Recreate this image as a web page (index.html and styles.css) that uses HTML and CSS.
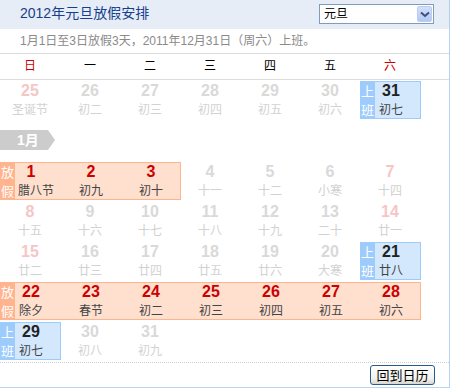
FILE: index.html
```html
<!DOCTYPE html>
<html lang="zh-CN">
<head>
<meta charset="utf-8">
<title>2012年元旦放假安排</title>
<link rel="stylesheet" href="styles.css">
</head>
<body>
<div class="panel">
  <div class="head">
    <h1 class="title">2012年元旦放假安排</h1>
    <div class="picker">
      <span class="picker-text">元旦</span>
      <span class="picker-btn">
        <svg width="10" height="7" viewBox="0 0 10 7"><path d="M1 1.5 L5 5 L9 1.5" fill="none" stroke="#3b4f7a" stroke-width="2"/></svg>
      </span>
    </div>
  </div>
  <div class="note">1月1日至3日放假3天，2011年12月31日（周六）上班。</div>
  <div class="weekdays">
    <span class="wd red">日</span><span class="wd">一</span><span class="wd">二</span><span class="wd">三</span><span class="wd">四</span><span class="wd">五</span><span class="wd red">六</span>
  </div>

  <div class="week first">
    <div class="d dim sun"><b>25</b><i>圣诞节</i></div>
    <div class="d dim"><b>26</b><i>初二</i></div>
    <div class="d dim"><b>27</b><i>初三</i></div>
    <div class="d dim"><b>28</b><i>初四</i></div>
    <div class="d dim"><b>29</b><i>初五</i></div>
    <div class="d dim"><b>30</b><i>初六</i></div>
    <div class="range work c7 n1"><span class="tag">上<br>班</span>
      <div class="d"><b>31</b><i>初七</i></div>
    </div>
  </div>

  <div class="month"><span class="month-flag">1月</span></div>

  <div class="week">
    <div class="range holiday c1 n3"><span class="tag">放<br>假</span>
      <div class="d"><b>1</b><i class="wide">腊八节</i></div>
      <div class="d"><b>2</b><i>初九</i></div>
      <div class="d"><b>3</b><i>初十</i></div>
    </div>
    <div class="d dim"><b>4</b><i>十一</i></div>
    <div class="d dim"><b>5</b><i>十二</i></div>
    <div class="d dim"><b>6</b><i>小寒</i></div>
    <div class="d dim sun"><b>7</b><i>十四</i></div>
  </div>

  <div class="week">
    <div class="d dim sun"><b>8</b><i>十五</i></div>
    <div class="d dim"><b>9</b><i>十六</i></div>
    <div class="d dim"><b>10</b><i>十七</i></div>
    <div class="d dim"><b>11</b><i>十八</i></div>
    <div class="d dim"><b>12</b><i>十九</i></div>
    <div class="d dim"><b>13</b><i>二十</i></div>
    <div class="d dim sun"><b>14</b><i>廿一</i></div>
  </div>

  <div class="week">
    <div class="d dim sun"><b>15</b><i>廿二</i></div>
    <div class="d dim"><b>16</b><i>廿三</i></div>
    <div class="d dim"><b>17</b><i>廿四</i></div>
    <div class="d dim"><b>18</b><i>廿五</i></div>
    <div class="d dim"><b>19</b><i>廿六</i></div>
    <div class="d dim"><b>20</b><i>大寒</i></div>
    <div class="range work c7 n1"><span class="tag">上<br>班</span>
      <div class="d"><b>21</b><i>廿八</i></div>
    </div>
  </div>

  <div class="week">
    <div class="range holiday c1 n7"><span class="tag">放<br>假</span>
      <div class="d"><b>22</b><i>除夕</i></div>
      <div class="d"><b>23</b><i>春节</i></div>
      <div class="d"><b>24</b><i>初二</i></div>
      <div class="d"><b>25</b><i>初三</i></div>
      <div class="d"><b>26</b><i>初四</i></div>
      <div class="d"><b>27</b><i>初五</i></div>
      <div class="d"><b>28</b><i>初六</i></div>
    </div>
  </div>

  <div class="week">
    <div class="range work c1 n1"><span class="tag">上<br>班</span>
      <div class="d"><b>29</b><i>初七</i></div>
    </div>
    <div class="d dim"><b>30</b><i>初八</i></div>
    <div class="d dim"><b>31</b><i>初九</i></div>
  </div>

  <div class="foot">
    <button class="back" type="button">回到日历</button>
  </div>
</div>
</body>
</html>
```

FILE: styles.css
```css
* { box-sizing: border-box; }
html, body { margin: 0; padding: 0; background: #fff; }
body {
  font-family: "Liberation Sans", "Noto Sans CJK SC", sans-serif;
  font-size: 12px;
  color: #333;
}
.panel {
  width: 450px;
  height: 388px;
  border-right: 1px solid #b5d0f3;
  border-bottom: 1px solid #bcd4f4;
}
.head {
  height: 29px;
  background: #e6edf7;
  display: flex;
  align-items: flex-start;
  justify-content: space-between;
  padding: 4px 15px 0 20px;
}
.title {
  margin: 0;
  font-size: 14px;
  font-weight: normal;
  line-height: 18px;
  color: #173f8c;
}
.picker {
  width: 115px;
  height: 20px;
  border: 1px solid #7f9db9;
  background: #fff;
  display: flex;
  align-items: center;
  justify-content: space-between;
  padding: 0 1px 0 4px;
}
.picker-text { font-size: 12px; color: #000; line-height: 16px; }
.picker-btn {
  width: 15px;
  height: 16px;
  border-radius: 2px;
  background: linear-gradient(#d3dffa, #b4c8f4);
  border: 1px solid #bccdf2;
  display: flex;
  align-items: center;
  justify-content: center;
}
.note {
  height: 25px;
  line-height: 24px;
  padding-left: 20px;
  color: #8a8a8a;
  border-bottom: 1px solid #dcdcdc;
}
.weekdays {
  display: grid;
  grid-template-columns: repeat(7, 60px);
  height: 26px;
  border-bottom: 1px solid #dcdcdc;
}
.wd {
  text-align: center;
  line-height: 25px;
  color: #000;
  font-size: 12px;
}
.wd.red { color: #c00; }

.week {
  display: grid;
  grid-template-columns: repeat(7, 60px);
  height: 40px;
}
.d {
  display: flex;
  flex-direction: column;
  align-items: center;
  padding-top: 1px;
  white-space: nowrap;
}
.d b {
  font-size: 16px;
  font-weight: bold;
  line-height: 20px;
  color: #222;
}
.d i {
  font-style: normal;
  font-size: 12px;
  line-height: 18px;
  color: #444;
}
.d.dim b { color: #d9d9d9; }
.d.dim i { color: #d2d2d2; }
.d.dim.sun b { color: #f5c6c6; }

.range {
  position: relative;
  display: grid;
  margin: 1px -1px 1px 0;
  height: 38px;
  border: 1px solid;
}
.range .d { padding-top: 0; }
.range .d b { line-height: 18px; }
.range .d i { line-height: 20px; }
.range .d i.wide { padding-left: 10px; }
.c1 { grid-column: 1 / span 1; }
.c7 { grid-column: 7 / span 1; }
.n1 { grid-template-columns: repeat(1, 60px); }
.n3 { grid-template-columns: repeat(3, 60px); grid-column-end: span 3; }
.n7 { grid-template-columns: repeat(7, 60px); grid-column-end: span 7; }

.holiday { background: #ffdfcd; border-color: #ffb48e; }
.holiday .d b { color: #cc0000; }
.work { background: #d3e8fc; border-color: #9dcbfb; }
.work .d b { color: #222; }

.tag {
  position: absolute;
  left: -1px;
  top: -1px;
  bottom: -1px;
  width: 15px;
  color: #fff;
  font-size: 13px;
  line-height: 19px;
  text-align: center;
  font-family: "Noto Sans CJK SC", sans-serif;
}
.holiday .tag { background: #ffb48e; }
.work .tag { background: #9dcbfb; }

.month {
  height: 41px;
  padding-top: 10px;
}
.month-flag {
  display: block;
  width: 55px;
  height: 20px;
  background: #cccccc;
  clip-path: polygon(0 0, 48px 0, 55px 50%, 48px 100%, 0 100%);
  color: #fff;
  font-weight: bold;
  font-size: 14px;
  line-height: 20px;
  padding-left: 17px;
}
.foot {
  border-top: 1px dotted #cfcfcf;
  margin-top: 1px;
  display: flex;
  justify-content: flex-end;
  padding: 2px 14px 0 0;
}
.back {
  width: 65px;
  height: 20px;
  padding: 0;
  border: 1px solid #2b5a8f;
  border-radius: 3px;
  background: linear-gradient(#ffffff, #f1f1ee 70%, #d9d6cf);
  font-family: "Noto Sans CJK SC", sans-serif;
  font-size: 13px;
  line-height: 18px;
  color: #000;
}
```
